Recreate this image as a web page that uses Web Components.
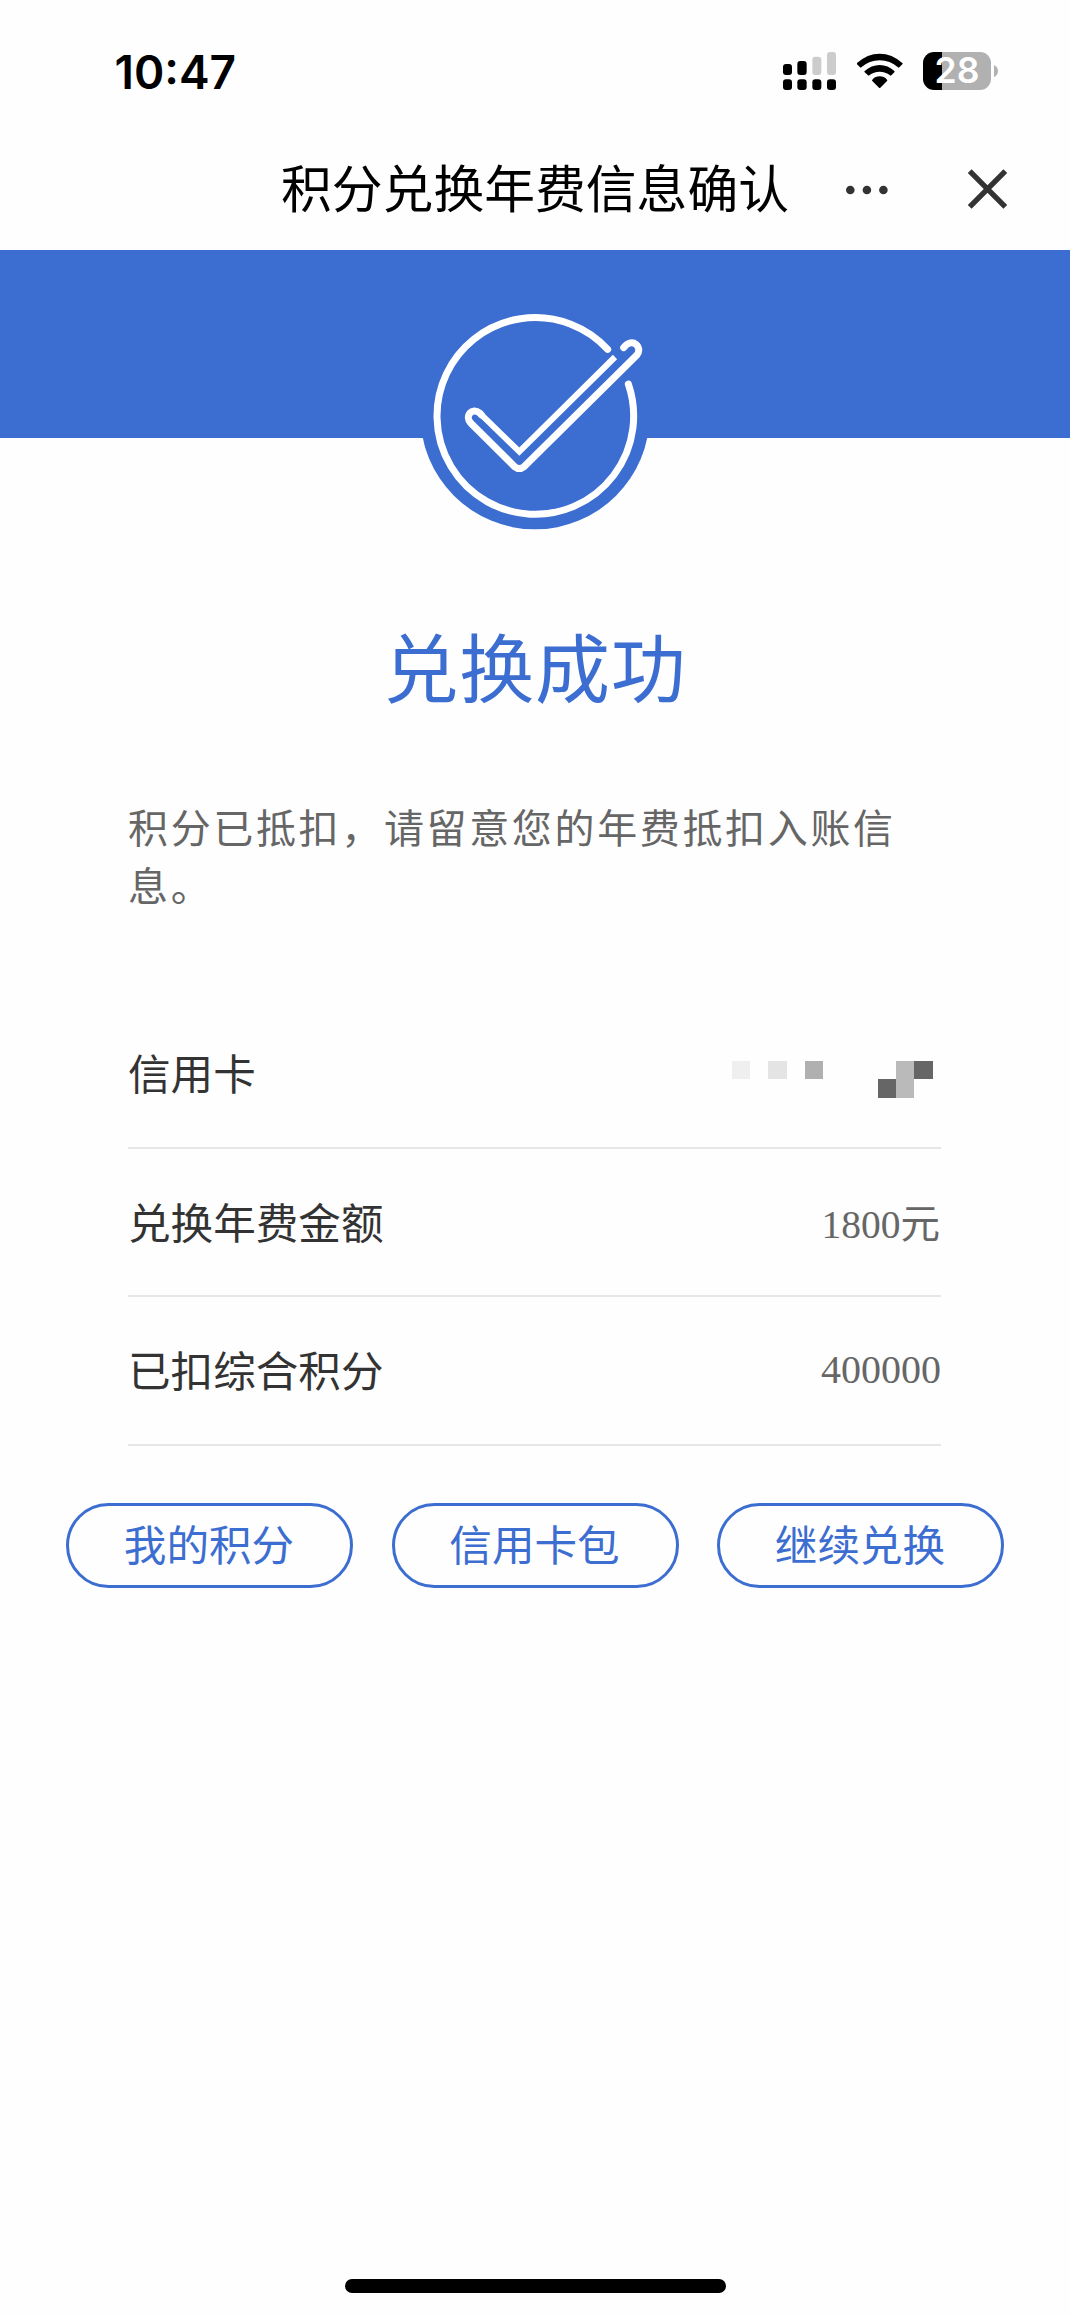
<!DOCTYPE html>
<html lang="zh-CN">
<head>
<meta charset="utf-8">
<title>积分兑换年费信息确认</title>
<style>
html,body{margin:0;padding:0;background:#fefefe}
body{font-family:"Noto Sans CJK SC","Noto Sans",sans-serif;color:#333}
</style>
</head>
<body>
<redeem-page></redeem-page>
<script>
const define = (name, html) => customElements.define(name, class extends HTMLElement {
  constructor() {
    super();
    this.attachShadow({ mode: 'open' }).innerHTML = html;
  }
});

define('status-bar', `
<style>
:host{display:flex;justify-content:space-between;height:140px;box-sizing:border-box;padding:48px 70px 0 114.5px;font-family:Inter,sans-serif;font-weight:600;color:#000}
time{font-size:46px;line-height:48px;letter-spacing:0}
.icons{display:flex;height:48px}
svg{display:block}
.signal{margin-right:20px;margin-top:4px}
.wifi{margin-right:20px;margin-top:4px}
.battery{display:flex;align-items:center;height:38px;margin-top:4px}
.cell{width:68px;height:38px;border-radius:11px;background:linear-gradient(90deg,#000 19px,#b1b1b1 19px);color:#fff;font-size:35.5px;font-weight:600;line-height:38px;text-align:center}
</style>
<time>10:47</time>
<div class="icons">
<svg class="signal" width="54" height="38" viewBox="99 66 162 114">
<g fill="#000"><rect x="99" y="102" width="27" height="33" rx="9"/><rect x="142" y="93" width="28" height="42" rx="9"/><rect x="99" y="148" width="27" height="32" rx="9"/><rect x="142" y="148" width="28" height="32" rx="9"/><rect x="187" y="148" width="27" height="32" rx="9"/><rect x="231" y="148" width="27" height="32" rx="9"/></g>
<g fill="#ccc"><rect x="187" y="80" width="27" height="55" rx="9"/><rect x="231" y="66" width="27" height="69" rx="9"/></g>
</svg>
<svg class="wifi" width="46" height="38" viewBox="320 66 138 114" fill="#000">
<path d="M320 99Q351 71 388 71T456 99Q458 101 456 103L447 112Q445 114 443 112Q419 91 388 91T333 112Q331 114 329 112L320 103Q318 101 320 99Z"/>
<path d="M343 123Q363 105 388 105T432 123Q434 125 432 127L423 136Q421 138 419 136Q406 125 388 125T357 136Q355 138 353 136L343 127Q341 125 343 123Z"/>
<path d="M366 149Q375 139 388 139T410 149Q412 151 410 153L390 173Q388 175 386 173L366 153Q364 151 366 149Z"/>
</svg>
<div class="battery"><div class="cell">28</div>
<svg width="9" height="14" viewBox="0 0 9 14"><path d="M3 1Q7 3 7 7T3 13Z" fill="#b1b1b1"/></svg></div>
</div>`);

define('title-bar', `
<style>
:host{display:grid;grid-template-columns:1fr 508px 1fr;height:110px;box-sizing:border-box;padding-bottom:15px;align-items:center;color:#000}
h1{grid-column:2;margin:-4px 0 0;font-size:50.8px;line-height:90px;font-weight:400;white-space:nowrap;text-align:center}
.actions{display:flex;align-items:center;justify-content:space-between;padding:3px 61px 0 56px}
svg{display:block}
.more{margin-top:2px}
</style>
<h1><slot></slot></h1>
<div class="actions">
<svg class="more" width="44" height="10" viewBox="0 0 44 10" fill="#333"><circle cx="5.3" cy="5" r="4.3"/><circle cx="21.9" cy="5" r="4.3"/><circle cx="38.4" cy="5" r="4.3"/></svg>
<svg width="42" height="42" viewBox="0 0 42 42" stroke="#333" stroke-width="5.4"><path d="M2.7 3.2 38.3 38.8M38.3 3.2 2.7 38.8"/></svg>
</div>`);

define('success-banner', `
<style>
:host{display:flex;justify-content:center;height:188px;background:#3c6dd1}
svg{display:block;flex:none;margin-top:40px;overflow:visible}
</style>
<svg width="250" height="250" viewBox="0 0 750 750" fill="none" stroke="#fff" stroke-width="21" stroke-linecap="round">
<circle cx="375" cy="374" r="344" fill="#3c6dd1" stroke="none"/>
<path d="M593 178A295 295 0 1 0 655 282"/>
<path d="M615 201 328 485 210 370" stroke-width="18" stroke-linecap="butt"/>
<path d="M214 374 209 369C186 351 163 378 182 399L314 530Q328 541 342 530L680 196C700 174 668 138 641 173" stroke-linejoin="round"/>
</svg>`);

define('result-message', `
<style>
:host{display:block;padding:172px 128px 0}
h2{margin:0;text-align:center;color:#3c6dd1;font-size:75px;line-height:110px;font-weight:400;letter-spacing:.8px}
p{margin:77px 0 0;color:#666;font-size:40px;line-height:58px;letter-spacing:2.65px;width:790px}
</style>
<h2><slot name="title"></slot></h2>
<p><slot></slot></p>`);

define('detail-row', `
<style>
:host{display:flex;justify-content:space-between;align-items:center;height:148.6px;box-sizing:border-box;border-bottom:2px solid #e6e6e6}
.label{font-size:42.6px;line-height:60px;color:#333;margin-top:-2px}
.value{font-family:"Liberation Serif","Noto Sans CJK SC",serif;font-size:40px;line-height:60px;color:#666}
:host([unit]) .value{font-size:39.5px;padding:6px 1px 0 0}
</style>
<span class="label"><slot name="label"></slot></span>
<span class="value"><slot></slot></span>`);

define('masked-number', `
<style>:host{display:block;margin-right:7px;margin-top:12px}svg{display:block}</style>
<svg width="202" height="37" viewBox="0 0 202 37" shape-rendering="crispEdges">
<path fill="#efefef" d="M0 0h18v18H0z"/><path fill="#e4e4e4" d="M36 0h19v18H36z"/><path fill="#b0b0b0" d="M73 0h18v18H73z"/><path fill="#666" d="M146 18h18v19h-18zM182 0h19v18h-19z"/><path fill="#bababa" d="M164 0h18v37h-18z"/>
</svg>`);

define('pill-button', `
<style>
:host{display:block;flex:1}
button{display:block;width:100%;height:85px;box-sizing:border-box;padding:0 1px 5px 0;margin:0;border:3px solid #3c6dd1;border-radius:43px;background:transparent;color:#3c6dd1;font:400 42.6px/74px "Noto Sans CJK SC",sans-serif}
</style>
<button type="button"><slot></slot></button>`);

define('home-indicator', `
<style>:host{display:block;width:381px;height:14px;border-radius:7px;background:#000;margin:auto auto 22px}</style>`);

define('redeem-page', `
<style>
:host{display:flex;flex-direction:column;width:1070px;height:2315px;background:#fefefe}
.details{display:flex;flex-direction:column;margin:87px 129px 0 128px}
.actions{display:flex;gap:38.5px;margin:57px 66px 0}
</style>
<status-bar></status-bar>
<title-bar>积分兑换年费信息确认</title-bar>
<success-banner></success-banner>
<result-message><span slot="title">兑换成功</span>积分已抵扣，请留意您的年费抵扣入账信息。</result-message>
<div class="details">
<detail-row><span slot="label">信用卡</span><masked-number></masked-number></detail-row>
<detail-row unit><span slot="label">兑换年费金额</span>1800元</detail-row>
<detail-row><span slot="label">已扣综合积分</span>400000</detail-row>
</div>
<div class="actions"><pill-button>我的积分</pill-button><pill-button>信用卡包</pill-button><pill-button>继续兑换</pill-button></div>
<home-indicator></home-indicator>`);
</script>
</body>
</html>
